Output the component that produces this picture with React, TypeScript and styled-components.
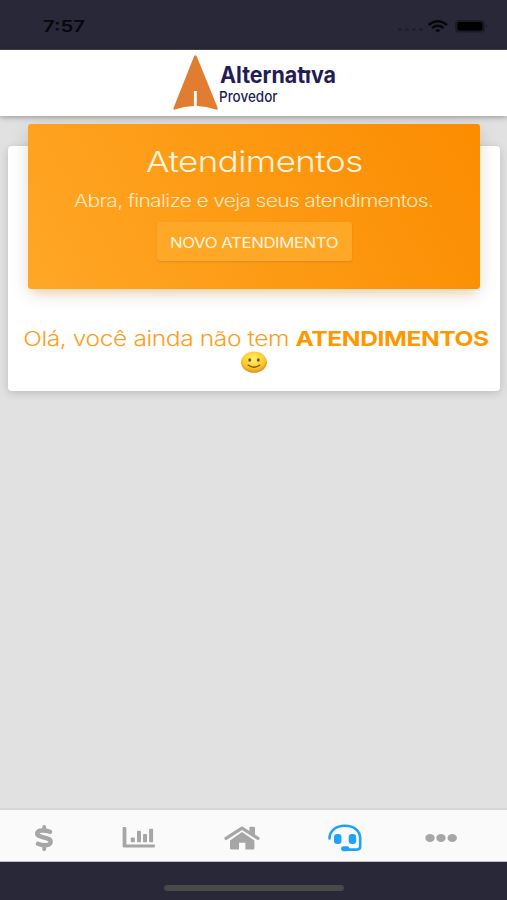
import React from 'react';
import styled, { createGlobalStyle } from 'styled-components';

const Global = createGlobalStyle`
  * { box-sizing: border-box; }
  body { margin: 0; background: #e1e1e1; font-family: "Inter", "Liberation Sans", sans-serif; }
`;
const Screen = styled.div`
  width: 507px; height: 900px; display: flex; flex-direction: column;
  background: #e1e1e1; overflow: hidden;
`;
const StatusBar = styled.div`
  height: 50px; flex: none; background: #282838; display: flex; justify-content: space-between;
  padding: 16px 19px 0 43px; border-bottom: 1px solid #454452;
`;
const Stretch = styled.span<{ $x: number; $track?: number; $origin?: string }>`
  display: inline-block; white-space: nowrap; letter-spacing: ${p => p.$track ?? 0}px;
  transform: scaleX(${p => p.$x}); transform-origin: ${p => p.$origin ?? 'center'};
`;
const Clock = styled.div`font-size: 16px; line-height: 21px; font-weight: 600; color: #07070f;`;
const Header = styled.header`
  height: 66px; flex: none; background: #fff; display: flex; padding-left: 169px; align-items: flex-start;
  box-shadow: 0 1px 6px rgba(0,0,0,.36); position: relative; z-index: 1;
`;
const Content = styled.main`flex: 1; padding: 30px 7px 0 8px;`;
const Card = styled.section`
  height: 245px; background: #fff; border-radius: 4px; padding: 0 20px;
  box-shadow: 0 2px 9px rgba(0,0,0,.17); display: flex; flex-direction: column; align-items: center;
`;
const Banner = styled.div`
  width: 452px; height: 165px; flex: none; margin-top: -22px; border-radius: 3px; padding-top: 20px;
  background: linear-gradient(60deg, #ffa726, #fb8c00);
  box-shadow: 0 4px 20px rgba(0,0,0,.1), 0 7px 12px -5px rgba(255,152,0,.36);
  display: flex; flex-direction: column; align-items: center; color: #fff6df;
`;
const Title = styled.h1`margin: 0; font-size: 29px; line-height: 36px; font-weight: 300;`;
const Subtitle = styled.p`margin: 9px 0 0; font-size: 17.5px; line-height: 24px; font-weight: 300; color: #ffeac0;`;
const NewButton = styled.button`
  margin: 9px 0 0; width: 195px; height: 39px; border: 0; border-radius: 3px; padding: 3px 0 0; background: #ffa726;
  color: #fff6e0; font: 400 14px/20px "Inter", sans-serif; display: flex; justify-content: center; align-items: center;
  box-shadow: 0 1px 2px rgba(150,110,60,.35);
`;
const Empty = styled.p`
  margin: 38px 0 0; font-size: 20.5px; line-height: 24px; font-weight: 300; color: #ff9e1b;
  display: flex; flex-direction: column; align-items: center;
  b { font-weight: 700; color: #ff9800; }
`;
const Message = styled.span`padding-left: 4px;`;
const TabBar = styled.nav`
  height: 54px; flex: none; background: #fafafa; border-top: 2px solid #d6d6d6; border-bottom: 1px solid #c0c0c8;
  display: flex; align-items: center; padding: 5px 0 0 33px;
`;
const Tab = styled.a<{ $active?: boolean; $gap: number }>`
  display: flex; margin-left: ${p => p.$gap}px; color: ${p => (p.$active ? '#20a3f5' : '#a6a6a6')};
`;
const HomeArea = styled.footer`
  height: 38px; flex: none; background: #282838; display: flex; justify-content: center; padding-top: 23px;
`;
const HomeIndicator = styled.div`width: 180px; height: 6px; border-radius: 3px; background: #484a49;`;

const Signals = () => (
  <svg width="92" height="22" viewBox="396 16 92 22">
    <g fill="#20202d"><rect x="398" y="28" width="4" height="3" rx="1" /><rect x="405" y="28" width="4" height="3" rx="1" /><rect x="412" y="28" width="4" height="3" rx="1" /><rect x="419" y="28" width="4" height="3" rx="1" /></g>
    <g fill="none" stroke="#06060b" strokeWidth="2.5">
      <path d="M428.6 25Q437.8 17.6 447 25" /><path d="M432 28Q437.8 23.6 443.6 28" />
    </g>
    <path d="M435 30.2Q437.8 28.2 440.6 30.2L437.8 32.4Z" fill="#06060b" />
    <rect x="455" y="20" width="30" height="12.5" rx="4" fill="#1b1b27" />
    <rect x="457.5" y="22" width="25" height="8.5" rx="2.5" fill="#000" />
    <path d="M486 24v4q2-2 0-4" fill="#1b1b27" />
  </svg>
);

const Logo = () => (
  <svg width="200" height="64" viewBox="169 50 200 64">
    <path d="M195.3 55.2Q196.4 55.2 197 57L217.6 107.8Q218.2 110.4 215.8 109.6Q206.5 106.3 196.8 106V91H193.9V106Q184 106.3 175 109.6Q172.8 110.3 173.6 107.8L193.8 57Q194.3 55.2 195.3 55.2Z" fill="#e07d30" />
    <g fill="#231c57" fontFamily="Inter, sans-serif">
      <text x="220" y="82.8" fontSize="22.5" fontWeight="650" textLength="116" lengthAdjust="spacingAndGlyphs">Alternativa</text>
      <text x="219" y="101.5" fontSize="14.8" fontWeight="500" textLength="58.5" lengthAdjust="spacingAndGlyphs">Provedor</text>
    </g>
    {/* The t and i share one crossbar, and the i has no dot */}
    <rect x="305.8" y="64" width="5.6" height="6.4" fill="#fff" />
    <rect x="301" y="70.4" width="9.4" height="2.6" fill="#231c57" />
  </svg>
);

const Smile = () => (
  <svg width="28" height="24" viewBox="0 0 28 24">
    <defs>
      <radialGradient id="face" cx=".48" cy=".35" r=".65">
        <stop offset="0" stopColor="#fff06a" /><stop offset=".65" stopColor="#fcc92d" /><stop offset="1" stopColor="#dd8f1b" />
      </radialGradient>
    </defs>
    <ellipse cx="14" cy="11.2" rx="13" ry="10.6" fill="url(#face)" />
    <ellipse cx="9.7" cy="9" rx="1.5" ry="1.8" fill="#77511a" /><ellipse cx="18.3" cy="9" rx="1.5" ry="1.8" fill="#77511a" />
    <path d="M8.2 14.2Q14 18.2 19.8 14.2" fill="none" stroke="#8a5a18" strokeWidth="1.4" strokeLinecap="round" />
  </svg>
);

const Dollar = () => (
  <svg width="22" height="28" viewBox="0 0 22 28" fill="none" stroke="currentColor" strokeWidth="4.4" strokeLinecap="round">
    <path d="M17 7.8C14.5 6.9 12 6.5 9.5 6.5C3.2 6.5 2.4 11.2 8 12.7L14 14.3C19.6 16 18.5 21.2 12.5 21.2C9.8 21.2 7.2 20.8 5 19.8" />
    <path d="M11.2 2.8V5.5M11.2 22V25.2" strokeWidth="3.8" />
  </svg>
);
const Chart = () => (
  <svg width="34" height="22" viewBox="0 0 34 22" fill="currentColor">
    <path d="M1.5 0H3Q4.4 0 4.4 1.3V17.4H31.8Q33 17.4 33 18.4V19.3Q33 20.5 31.8 20.5H2Q.6 20.5 .6 19V1.3Q.6 0 1.5 0Z" />
    <rect x="8.8" y="10.5" width="4" height="4.7" rx=".8" /><rect x="15" y="3.8" width="4" height="11.4" rx=".8" />
    <rect x="21" y="7" width="4" height="8.2" rx=".8" /><rect x="27.1" y="1.8" width="4" height="13.4" rx=".8" />
  </svg>
);
const House = () => (
  <svg width="36" height="26" viewBox="0 0 36 26">
    <path d="M18 7L30.4 15.4V23.3Q30.4 24.6 29 24.6H21.4V17.8H15V24.6H7.3Q6 24.6 6 23.3V15.4Z" fill="currentColor" />
    <path d="M2 13.3L18 3.2L34 13.3" fill="none" stroke="currentColor" strokeWidth="3.2" strokeLinejoin="round" strokeLinecap="round" />
    <path d="M26.2 1.7H30.2Q31 1.7 31 2.5V11L25.4 7.4V2.5Q25.4 1.7 26.2 1.7Z" fill="currentColor" />
  </svg>
);
const Headset = () => (
  <svg width="34" height="28" viewBox="0 0 34 28">
    <path d="M1.5 14.5C1.5 6.5 8 1.8 17 1.8C26 1.8 32.2 6.5 32.2 14.5V22.6Q32.2 25.6 29 25.6H19" fill="none" stroke="currentColor" strokeWidth="2.6" strokeLinecap="round" />
    <rect x="6" y="10" width="7.5" height="10" rx="3.2" fill="currentColor" />
    <rect x="20.7" y="10" width="7.5" height="10" rx="3.2" fill="currentColor" />
    <rect x="13" y="22.3" width="8.5" height="4.9" rx="2.4" fill="currentColor" />
  </svg>
);
const Dots = () => (
  <svg width="32" height="10" viewBox="0 0 32 10" fill="currentColor">
    <ellipse cx="5" cy="5" rx="4.7" ry="4" /><ellipse cx="16" cy="5" rx="4.7" ry="4" /><ellipse cx="27.2" cy="5" rx="4.7" ry="4" />
  </svg>
);

const tabs = [
  { label: 'Financeiro', Icon: Dollar, gap: 0 }, { label: 'Consumo', Icon: Chart, gap: 67 }, { label: 'Início', Icon: House, gap: 68 },
  { label: 'Atendimentos', Icon: Headset, gap: 68, active: true }, { label: 'Mais', Icon: Dots, gap: 63 },
];

export default function App() {
  return (
    <Screen>
      <Global />
      <StatusBar>
        <Clock><Stretch $x={1.27} $origin="left">7:57</Stretch></Clock>
        <Signals />
      </StatusBar>
      <Header><Logo /></Header>
      <Content>
        <Card>
          <Banner>
            <Title><Stretch $x={1.2} $track={-0.4}>Atendimentos</Stretch></Title>
            <Subtitle><Stretch $x={1.2} $track={-0.57}>Abra, finalize e veja seus atendimentos.</Stretch></Subtitle>
            <NewButton><Stretch $x={1.2} $track={-0.36}>NOVO ATENDIMENTO</Stretch></NewButton>
          </Banner>
          <Empty>
            <Message><Stretch $x={1.2} $track={-0.36}>Olá, você ainda não tem <b>ATENDIMENTOS</b></Stretch></Message>
            <Smile />
          </Empty>
        </Card>
      </Content>
      <TabBar>
        {tabs.map(({ label, Icon, gap, active }) => (
          <Tab key={label} $active={active} $gap={gap} aria-label={label}><Icon /></Tab>
        ))}
      </TabBar>
      <HomeArea><HomeIndicator /></HomeArea>
    </Screen>
  );
}
